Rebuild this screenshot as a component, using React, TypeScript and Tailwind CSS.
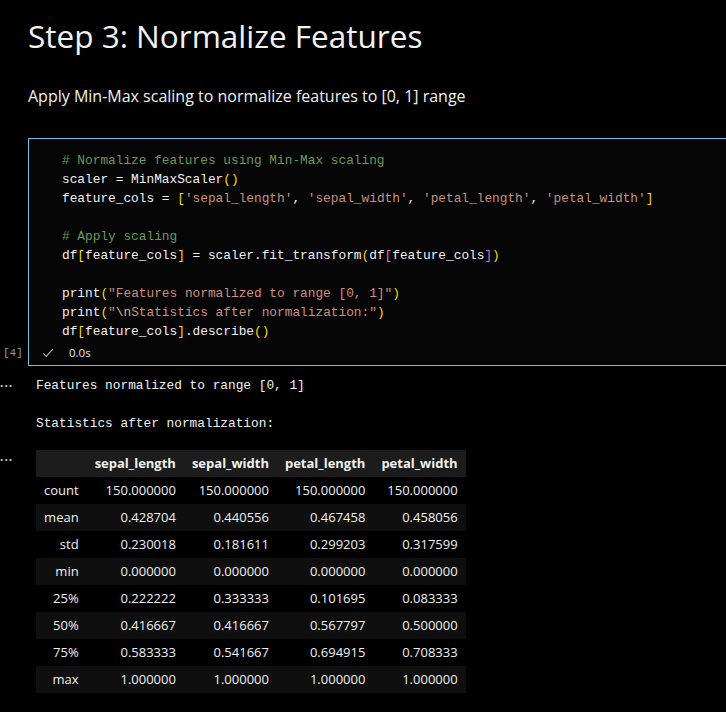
import React from "react";

const mono = { fontFamily: '"Liberation Mono", "DejaVu Sans Mono", monospace' };

const C = ({ c, children }: { c: string; children: React.ReactNode }) => (
  <span className={c}>{children}</span>
);

const rows = [
  ["count", "150.000000", "150.000000", "150.000000", "150.000000"],
  ["mean", "0.428704", "0.440556", "0.467458", "0.458056"],
  ["std", "0.230018", "0.181611", "0.299203", "0.317599"],
  ["min", "0.000000", "0.000000", "0.000000", "0.000000"],
  ["25%", "0.222222", "0.333333", "0.101695", "0.083333"],
  ["50%", "0.416667", "0.416667", "0.567797", "0.500000"],
  ["75%", "0.583333", "0.541667", "0.694915", "0.708333"],
  ["max", "1.000000", "1.000000", "1.000000", "1.000000"],
];

const headers = ["", "sepal_length", "sepal_width", "petal_length", "petal_width"];

export default function App() {
  const str = "text-[#ce9178]";
  const gold = "text-[#ffd700]";
  const pink = "text-[#da70d6]";
  const cmt = "text-[#6a9955]";

  return (
    <div
      className="w-[726px] h-[712px] overflow-hidden bg-black text-white"
      style={{ fontFamily: '"Open Sans", "Noto Sans", sans-serif' }}
    >
      <div className="pl-[28px] pt-[14px]">
        <h1 className="text-[31.5px] leading-[44px] text-[#f3f3f3]">Step 3: Normalize Features</h1>
        <p className="mt-[27px] text-[16px] leading-[22px] text-[#f0f0f0]">
          Apply Min-Max scaling to normalize features to [0, 1] range
        </p>
      </div>

      {/* code cell */}
      <div className="mt-[31px] flex">
        <div className="w-[28px] shrink-0 flex flex-col justify-end pb-[5px]">
          <span className="text-[11px] text-[#9a9a9a] pl-[3px]" style={mono}>
            [4]
          </span>
        </div>
        <div className="w-[720px] shrink-0 border border-[#6fc3df] bg-[#050505]">
          <pre
            className="pl-[33px] pt-[12px] text-[12.8px] leading-[19px] text-[#f2f2f2]"
            style={mono}
          >
            <C c={cmt}># Normalize features using Min-Max scaling</C>
            {"\n"}scaler = MinMaxScaler<C c={gold}>()</C>
            {"\n"}feature_cols = <C c={gold}>[</C>
            <C c={str}>'sepal_length'</C>, <C c={str}>'sepal_width'</C>, <C c={str}>'petal_length'</C>,{" "}
            <C c={str}>'petal_width'</C>
            <C c={gold}>]</C>
            {"\n"}
            {"\n"}
            <C c={cmt}># Apply scaling</C>
            {"\n"}df<C c={gold}>[</C>feature_cols<C c={gold}>]</C> = scaler.fit_transform<C c={gold}>(</C>df
            <C c={pink}>[</C>feature_cols<C c={pink}>]</C>
            <C c={gold}>)</C>
            {"\n"}
            {"\n"}print<C c={gold}>(</C>
            <C c={str}>"Features normalized to range [0, 1]"</C>
            <C c={gold}>)</C>
            {"\n"}print<C c={gold}>(</C>
            <C c={str}>"</C>
            <C c="text-[#d7ba7d]">\n</C>
            <C c={str}>Statistics after normalization:"</C>
            <C c={gold}>)</C>
            {"\n"}df<C c={gold}>[</C>feature_cols<C c={gold}>]</C>.describe<C c={gold}>()</C>
          </pre>
          <div className="flex items-center h-[24px] pl-[12px]">
            <svg width="14" height="14" viewBox="0 0 16 16" className="text-[#89d185]">
              <path d="M2.5 8.5 L6 12 L13.5 3.5" fill="none" stroke="currentColor" strokeWidth="1.3" />
            </svg>
            <span className="ml-[14px] text-[11.5px] text-[#e6e6e6]">0.0s</span>
          </div>
        </div>
      </div>

      {/* output */}
      <div className="flex mt-[10px]">
        <div className="w-[36px] shrink-0 pt-[2px] text-[#d0d0d0] text-[12px] leading-[16px] tracking-[1px] font-bold">···</div>
        <pre className="text-[12.8px] leading-[19px] text-[#f2f2f2]" style={mono}>
          {"Features normalized to range [0, 1]\n\nStatistics after normalization:"}
        </pre>
      </div>

      <div className="flex mt-[17px]">
        <div className="w-[36px] shrink-0 pt-[2px] text-[#d0d0d0] text-[12px] leading-[16px] tracking-[1px] font-bold">···</div>
        <table className="text-[13px] border-collapse text-[#f0f0f0]">
          <thead>
            <tr className="bg-[#1c1c1c] h-[27px]">
              {headers.map((h, i) => (
                <th key={i} className="px-2 text-right font-bold">
                  {h}
                </th>
              ))}
            </tr>
          </thead>
          <tbody>
            {rows.map((r, ri) => (
              <tr key={ri} className={`h-[27px] ${ri % 2 === 1 ? "bg-[#0f0f0f]" : ""}`}>
                {r.map((v, ci) => (
                  <td key={ci} className="px-2 text-right">
                    {v}
                  </td>
                ))}
              </tr>
            ))}
          </tbody>
        </table>
      </div>
    </div>
  );
}
